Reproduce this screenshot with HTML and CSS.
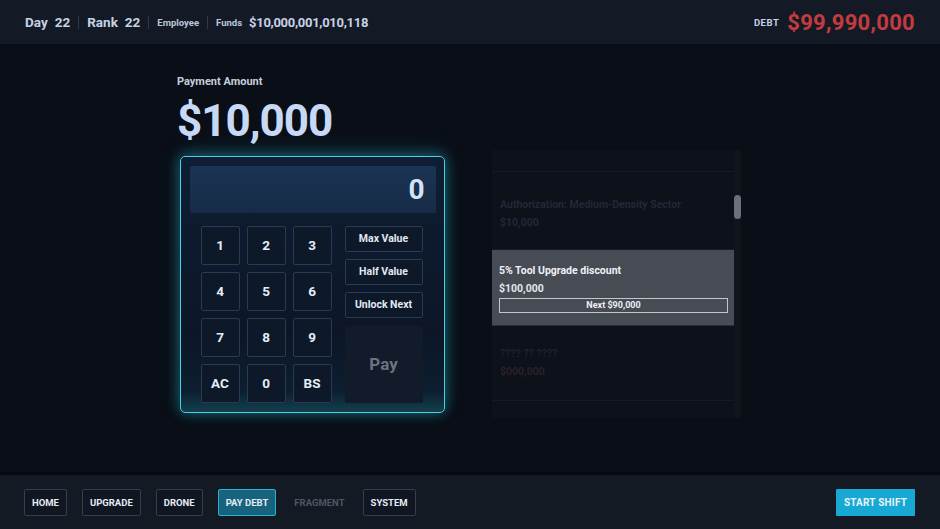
FILE: index.html
```html
<!DOCTYPE html>
<html>
<head>
<meta charset="utf-8">
<link rel="stylesheet" href="styles.css">
</head>
<body>
<div class="app">
  <header class="topbar">
    <div class="stats">
      <span class="stat-label">Day</span><span class="stat-val">22</span>
      <span class="sep"></span>
      <span class="stat-label">Rank</span><span class="stat-val">22</span>
      <span class="sep"></span>
      <span class="small">Employee</span>
      <span class="sep"></span>
      <span class="small">Funds</span><span class="funds">$10,000,001,010,118</span>
    </div>
    <div class="debt">
      <span class="debt-label">DEBT</span><span class="debt-val">$99,990,000</span>
    </div>
  </header>

  <main class="main">
    <section class="left">
      <div class="pay-label">Payment Amount</div>
      <div class="pay-amount">$10,000</div>
      <div class="keypad">
        <div class="display">0</div>
        <div class="keys-area">
          <div class="numgrid">
            <button class="key">1</button>
            <button class="key">2</button>
            <button class="key">3</button>
            <button class="key">4</button>
            <button class="key">5</button>
            <button class="key">6</button>
            <button class="key">7</button>
            <button class="key">8</button>
            <button class="key">9</button>
            <button class="key">AC</button>
            <button class="key">0</button>
            <button class="key">BS</button>
          </div>
          <div class="side">
            <button class="side-btn">Max Value</button>
            <button class="side-btn">Half Value</button>
            <button class="side-btn">Unlock Next</button>
            <button class="pay-btn">Pay</button>
          </div>
        </div>
      </div>
    </section>

    <section class="list-panel">
      <div class="list-view">
        <div class="list-inner">
          <div class="item item-top"></div>
          <div class="item item-faded">
            <div class="i-title">Authorization: Medium-Density Sector</div>
            <div class="i-price">$10,000</div>
          </div>
          <div class="item item-active">
            <div class="a-title">5% Tool Upgrade discount</div>
            <div class="a-price">$100,000</div>
            <div class="progress">Next $90,000</div>
          </div>
          <div class="item item-locked">
            <div class="l-title">???? ?? ????</div>
            <div class="l-price">$000,000</div>
          </div>
        </div>
      </div>
      <div class="scroll-track"><div class="scroll-thumb"></div></div>
    </section>
  </main>

  <footer class="bottombar">
    <nav class="nav">
      <button class="nav-btn">HOME</button>
      <button class="nav-btn">UPGRADE</button>
      <button class="nav-btn">DRONE</button>
      <button class="nav-btn active">PAY DEBT</button>
      <button class="nav-btn ghost">FRAGMENT</button>
      <button class="nav-btn">SYSTEM</button>
    </nav>
    <button class="start">START SHIFT</button>
  </footer>
</div>
</body>
</html>
```

FILE: styles.css
```css
* { box-sizing: border-box; }
html, body { margin: 0; padding: 0; }
body {
  width: 940px;
  height: 529px;
  overflow: hidden;
  background: #0a0e17;
  font-family: Roboto, "Noto Sans", sans-serif;
  color: #d6deea;
}
button { font-family: inherit; cursor: pointer; }

.app { display: flex; flex-direction: column; height: 529px; }

/* top bar */
.topbar {
  height: 44px;
  flex: none;
  background: #141a25;
  display: flex;
  align-items: center;
  justify-content: space-between;
  padding: 0 25px;
}
.stats { display: flex; align-items: center; gap: 7px; }
.stat-label { font-size: 13.5px; font-weight: 700; color: #c6d2e6; }
.stat-val { font-size: 13.5px; font-weight: 700; color: #c6d2e6; margin-left: 0; }
.sep { width: 1px; height: 13px; background: #2f3848; margin: 0 1px; }
.small { font-size: 9.5px; font-weight: 700; color: #bcc7d8; }
.funds { font-size: 13px; font-weight: 700; color: #c6d2e6; letter-spacing: -0.3px; }
.debt { display: flex; align-items: center; gap: 8px; }
.debt-label { font-size: 9.5px; font-weight: 700; color: #c6d2e6; letter-spacing: 0.5px; }
.debt-val { font-size: 22px; font-weight: 700; color: #c43b3f; letter-spacing: 0.3px; }

/* main */
.main {
  flex: 1;
  display: flex;
  align-items: flex-start;
  padding: 31px 0 0 177px;
  gap: 47px;
}
.left { width: 268px; display: flex; flex-direction: column; }
.pay-label { font-size: 11px; font-weight: 700; color: #c4cedd; height: 14px; }
.pay-amount {
  font-size: 44px;
  font-weight: 700;
  color: #c8d9f6;
  letter-spacing: -1px;
  line-height: 46px;
  margin-top: 9px;
}
.keypad {
  margin: 12px 0 0 3px;
  width: 265px;
  height: 257px;
  border: 1.5px solid #43d3e3;
  border-radius: 5px;
  background: linear-gradient(180deg, #0f1e34 0%, #0c1627 70%, #0d1f30 92%, #12404e 100%);
  box-shadow: 0 0 14px rgba(45, 200, 220, 0.45), 0 -6px 22px rgba(40, 180, 200, 0.15);
  padding: 8.5px 8.5px 8px 8.5px;
  display: flex;
  flex-direction: column;
}
.display {
  height: 47px;
  background: linear-gradient(180deg, #1b3454 0%, #162b47 100%);
  border-radius: 2px;
  text-align: right;
  padding-right: 11px;
  font-size: 28px;
  font-weight: 700;
  line-height: 47px;
  color: #d4e2f6;
}
.keys-area {
  display: flex;
  gap: 13px;
  padding: 13px 12px 0 11px;
}
.numgrid {
  display: grid;
  grid-template-columns: repeat(3, 39px);
  grid-auto-rows: 39px;
  gap: 7px;
}
.key {
  border: 1px solid #2a3a52;
  border-radius: 2px;
  background: #0d1929;
  color: #e6edf7;
  font-size: 13.5px;
  font-weight: 700;
  padding: 0;
}
.side { display: flex; flex-direction: column; width: 78px; gap: 7px; }
.side-btn {
  height: 26px;
  border: 1px solid #2a3a52;
  border-radius: 2px;
  background: #0d1929;
  color: #e0e8f3;
  font-size: 10.5px;
  font-weight: 700;
  padding: 0;
}
.pay-btn {
  margin-top: 1px;
  height: 77px;
  border: none;
  border-radius: 2px;
  background: #111b29;
  color: #6b7380;
  font-size: 17px;
  font-weight: 700;
  padding: 0;
}

/* list */
.list-panel {
  margin-top: 75px;
  width: 249px;
  height: 268px;
  display: flex;
  background: #0d111a;
}
.list-view { flex: 1; overflow: hidden; }
.list-inner { display: flex; flex-direction: column; }
.item {
  border-bottom: 1px solid #161b25;
  padding: 0 8px;
  flex: none;
}
.item-top { height: 22px; }
.item-faded { height: 78px; padding-top: 26px; }
.i-title { font-size: 10.5px; font-weight: 700; color: #222836; }
.i-price { font-size: 10.5px; font-weight: 700; color: #222836; margin-top: 5px; }
.item-active {
  height: 76px;
  background: #474b53;
  padding: 14px 6px 0 7px;
  border-bottom: 1px solid #2a2e36;
}
.a-title { font-size: 10.5px; font-weight: 700; color: #eef1f6; }
.a-price { font-size: 10.5px; font-weight: 700; color: #e2e7ef; margin-top: 5px; }
.progress {
  margin-top: 3px;
  height: 15px;
  border: 1px solid #c2c6cd;
  font-size: 9px;
  font-weight: 700;
  color: #eef0f3;
  text-align: center;
  line-height: 13px;
}
.item-locked { height: 75px; padding-top: 21px; }
.l-title { font-size: 10.5px; font-weight: 700; color: #1d222d; }
.l-price { font-size: 10.5px; font-weight: 700; color: #2a2129; margin-top: 5px; }
.scroll-track { width: 7px; background: #10141b; padding-top: 45px; }
.scroll-thumb { width: 7px; height: 24px; border-radius: 4px; background: #6c7078; }

/* bottom */
.bottombar {
  height: 57px;
  flex: none;
  background: #131a24;
  border-top: 3px solid #060910;
  display: flex;
  align-items: center;
  justify-content: space-between;
  padding: 0 25px 0 24px;
}
.nav { display: flex; gap: 15px; align-items: center; }
.nav-btn {
  height: 27px;
  padding: 0 7px;
  border: 1px solid #363e4c;
  border-radius: 2px;
  background: #101722;
  color: #e6ecf4;
  font-size: 9.5px;
  font-weight: 700;
  letter-spacing: 0;
}
.nav-btn.active { background: #17637e; border-color: #2fb0d2; }
.nav-btn.ghost { background: transparent; border-color: transparent; color: #4f5664; padding: 0 2px; }
.start {
  height: 27px;
  width: 79px;
  border: none;
  border-radius: 1px;
  background: #17a8d3;
  color: #e8f6fb;
  font-size: 10px;
  font-weight: 700;
  letter-spacing: 0.2px;
}
```
